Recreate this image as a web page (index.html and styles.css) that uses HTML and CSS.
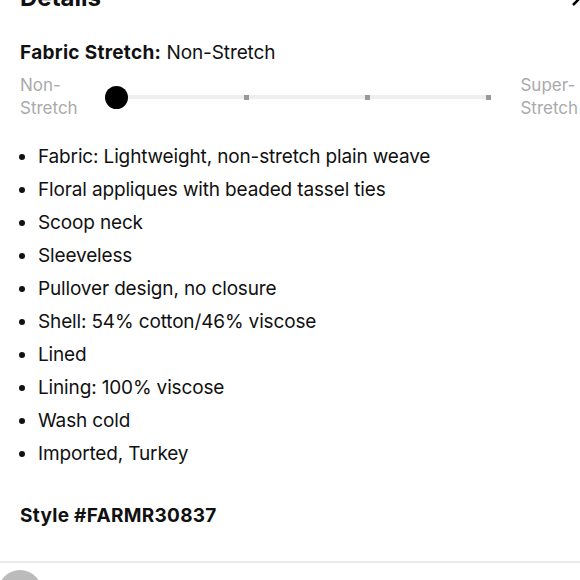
FILE: index.html
```html
<!DOCTYPE html>
<html>
<head>
<meta charset="utf-8">
<link rel="stylesheet" href="styles.css">
</head>
<body>
<section class="details">
  <div class="header">
    <h2 class="title">Details</h2>
    <svg class="chev" width="24" height="24" viewBox="0 0 24 24"><path d="M4 16 L12 8 L20 16" fill="none" stroke="#000" stroke-width="2.5"/></svg>
  </div>
  <p class="stretch"><b>Fabric Stretch:</b> Non-Stretch</p>
  <div class="scale">
    <div class="lab">Non-<br>Stretch</div>
    <div class="track">
      <span class="knob"></span>
      <span class="tick"></span>
      <span class="tick"></span>
      <span class="tick"></span>
    </div>
    <div class="lab">Super-<br>Stretch</div>
  </div>
  <ul class="list">
    <li>Fabric: Lightweight, non-stretch plain weave</li>
    <li>Floral appliques with beaded tassel ties</li>
    <li>Scoop neck</li>
    <li>Sleeveless</li>
    <li>Pullover design, no closure</li>
    <li>Shell: 54% cotton/46% viscose</li>
    <li>Lined</li>
    <li>Lining: 100% viscose</li>
    <li>Wash cold</li>
    <li>Imported, Turkey</li>
  </ul>
  <p class="style">Style #FARMR30837</p>
</section>
<div class="footer">
  <span class="avatar"></span>
</div>
</body>
</html>
```
FILE: styles.css
```css
html, body { margin: 0; padding: 0; background: #fff; }
body {
  font-family: Inter, "Noto Sans", sans-serif;
  color: #111;
  width: 580px;
  height: 580px;
  overflow: hidden;
}
.details { padding: 0 0 0 20px; }
.header {
  display: flex;
  justify-content: space-between;
  align-items: flex-start;
  margin-top: -16px;
  height: 28px;
}
.title { margin: 0; font-size: 24px; font-weight: 700; line-height: 28px; }
.chev { margin-right: -13px; margin-top: 5px; }
.stretch { margin: 27px 0 0; font-size: 19px; line-height: 28px; letter-spacing: -0.1px; }
.stretch b { font-weight: 700; letter-spacing: 0.3px; }
.scale {
  display: flex;
  align-items: center;
  margin-top: 7px;
}
.lab { font-size: 17px; line-height: 23px; color: #aaa; width: 80px; }
.lab:last-child { width: 60px; margin-left: 30px; }
.track {
  position: relative;
  flex: 0 0 374px;
  height: 4px;
  margin-left: 17px;
  background: #eee;
  display: flex;
  justify-content: space-between;
  align-items: center;
}
.knob {
  width: 23px; height: 23px; border-radius: 50%;
  background: #000;
  margin-left: -11px;
}
.tick { width: 5px; height: 5px; background: #999; }
.tick:last-child { margin-right: -1px; }
.list {
  margin: 20px 0 0;
  padding: 0 0 0 18px;
  font-size: 19px;
  line-height: 33px;
  letter-spacing: -0.15px;
}
.style { margin: 32px 0 0; font-size: 19px; font-weight: 700; line-height: 28px; letter-spacing: 0.3px; }
.footer {
  margin-top: 31px;
  border-top: 2px solid #eaeaea;
  padding-top: 7px;
  height: 20px;
  overflow: hidden;
}
.avatar {
  display: block;
  width: 44px; height: 44px; border-radius: 50%;
  background: #bbb;
  margin-left: -2px;
}
```
